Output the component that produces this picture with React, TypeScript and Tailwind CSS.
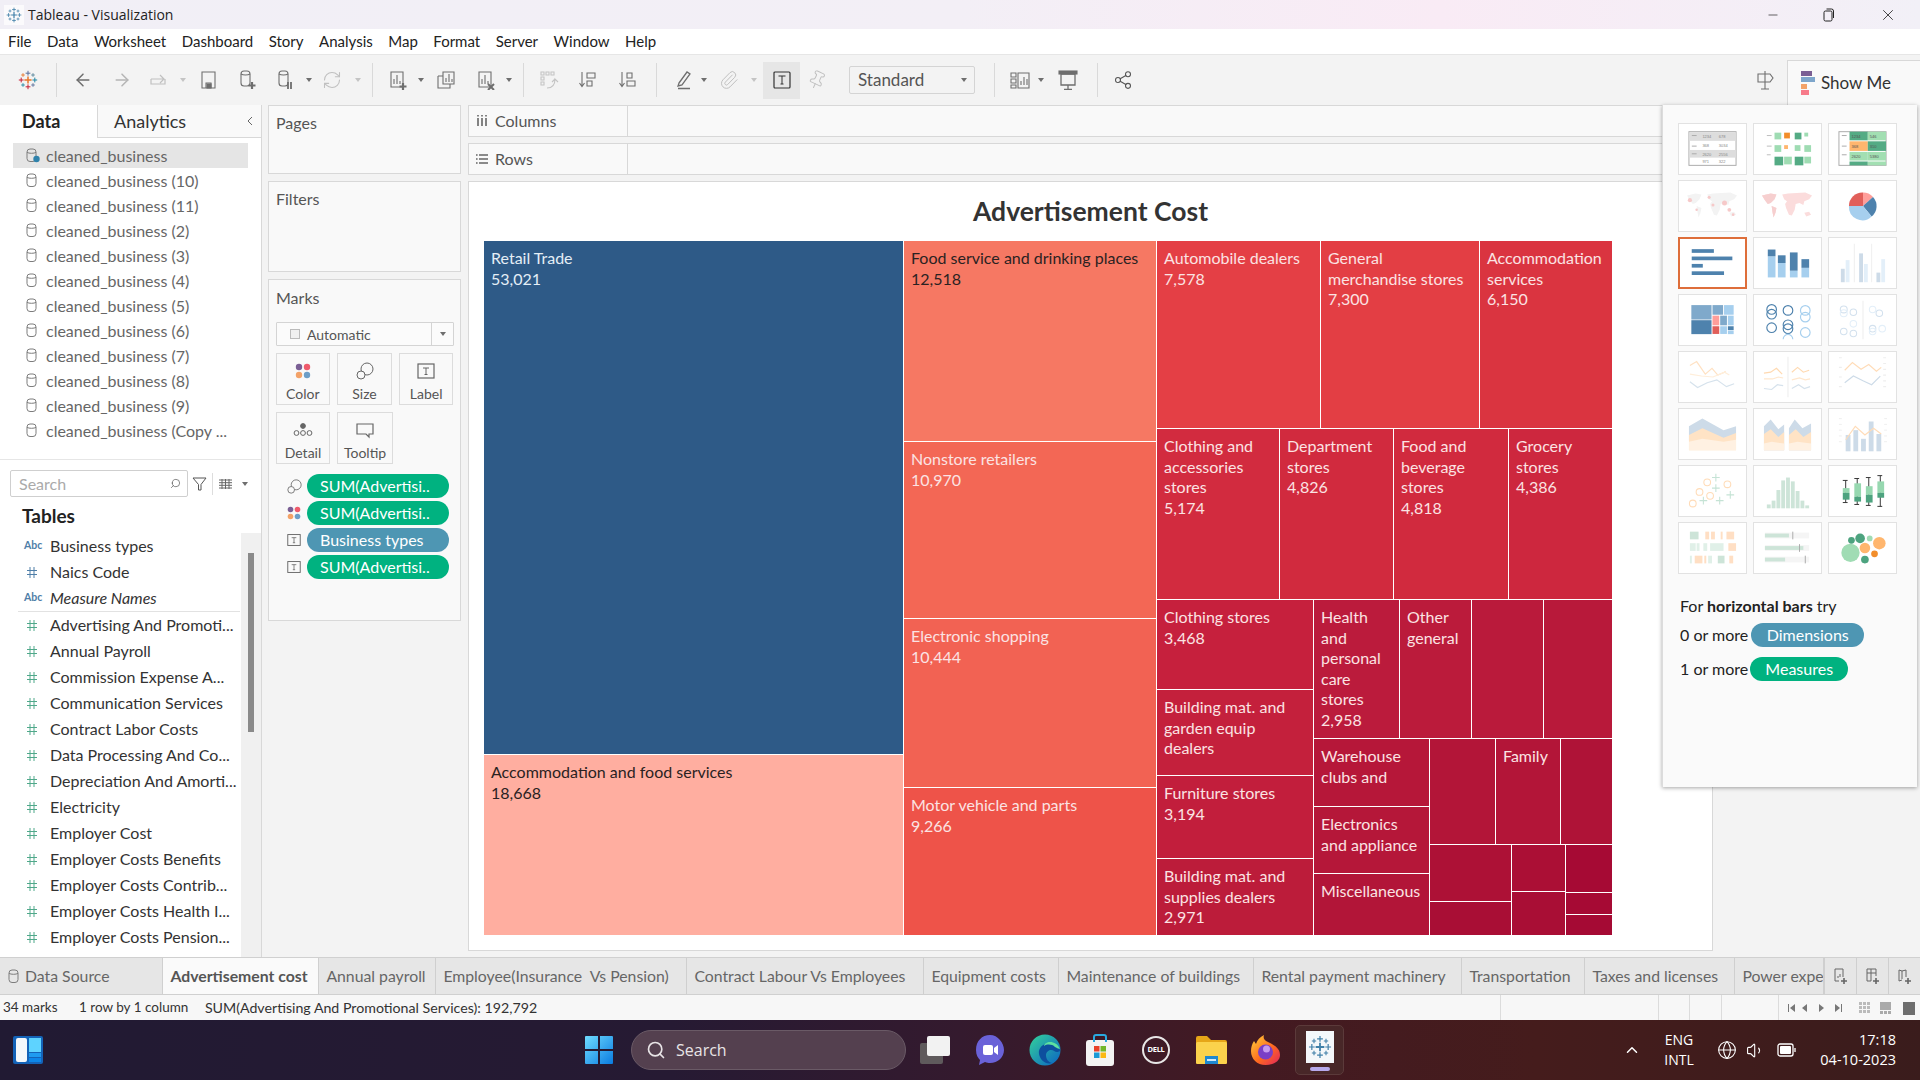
import { ArrowLeft, ArrowRight, Search, Share2, Paperclip, Pin, RefreshCw, ChevronUp, Volume1, Globe, X, Minus } from "lucide-react";
import type { ReactNode } from "react";

const Svg = ({ className = "", w = 20, h = 20, children }: { className?: string; w?: number; h?: number; children: ReactNode }) => (
  <svg width={w} height={h} viewBox={`0 0 ${w} ${h}`} className={`shrink-0 ${className}`} fill="none">
    {children}
  </svg>
);

const Caret = ({ className = "", off = false }: { className?: string; off?: boolean }) => (
  <svg width={6} height={4} viewBox="0 0 6 4" className={`shrink-0 ${className}`}>
    <path d="M0 0h6L3 4z" fill={off ? "#c4c4c4" : "#6e6e6e"} />
  </svg>
);

const Sep = ({ className = "" }: { className?: string }) => <div className={`w-px h-[34px] bg-[#d9d9d9] shrink-0 ${className}`} />;

const TableauLogo = ({ size = 20, mono = false }: { size?: number; mono?: boolean }) => {
  const c = mono ? ["#3f7fa8", "#3f7fa8", "#3f7fa8", "#3f7fa8", "#3f7fa8"] : ["#e8762b", "#5b6f9b", "#c72035", "#1f87a4", "#59879b"];
  const plus = (x: number, y: number, r: number, color: string, sw: number) => (
    <path key={`${x}-${y}`} d={`M${x - r} ${y}h${r * 2}M${x} ${y - r}v${r * 2}`} stroke={color} strokeWidth={sw} />
  );
  return (
    <svg width={size} height={size} viewBox="0 0 20 20" className="shrink-0">
      {plus(10, 10, 3.6, c[0], 1.5)}
      {plus(10, 3.2, 2.4, c[1], 1)}
      {plus(10, 16.8, 2.4, c[2], 1)}
      {plus(3.2, 10, 2.4, c[2], 1)}
      {plus(16.8, 10, 2.4, c[3], 1)}
      {plus(5, 5, 1.8, c[0], 0.9)}
      {plus(15, 5, 1.8, c[4], 0.9)}
      {plus(5, 15, 1.8, c[3], 0.9)}
      {plus(15, 15, 1.8, c[1], 0.9)}
    </svg>
  );
};

const Db = ({ check = false }: { check?: boolean }) => (
  <svg width={14} height={15} viewBox="0 0 14 15" className="shrink-0">
    <rect x="1" y="1" width="9" height="12.5" rx="3" fill="none" stroke="#7d7d7d" />
    <path d="M1 4.4c2 1.2 7 1.2 9 0" fill="none" stroke="#7d7d7d" />
    {check && <circle cx="10.5" cy="11" r="3.2" fill="#2f82ab" />}
  </svg>
);

const Dots = ({ size = 16 }: { size?: number }) => (
  <svg width={size} height={size} viewBox="0 0 16 16" className="shrink-0">
    <circle cx="4" cy="4" r="3.2" fill="#7a5f94" />
    <circle cx="12" cy="4" r="3.2" fill="#ef5b6c" />
    <circle cx="4" cy="12" r="3.2" fill="#f3a268" />
    <circle cx="12" cy="12" r="3.2" fill="#6d9ec7" />
  </svg>
);

const SizeIc = ({ size = 18 }: { size?: number }) => (
  <svg width={size} height={size} viewBox="0 0 18 18" fill="none" stroke="#666" className="shrink-0">
    <circle cx="11" cy="7" r="6" />
    <circle cx="5" cy="13" r="4" fill="#f9f9f9" />
  </svg>
);

const LabelIc = ({ size = 18 }: { size?: number }) => (
  <svg width={size} height={size} viewBox="0 0 18 18" fill="none" className="shrink-0">
    <rect x="1" y="2" width="16" height="14" stroke="#666" strokeWidth="1.2" />
    <path d="M6 6h6M9 6v6.5M7.5 12.5h3" stroke="#666" />
  </svg>
);

const Tile = ({ on = false, children }: { on?: boolean; children: ReactNode }) => (
  <div className={`w-[69px] h-[52px] bg-white border ${on ? "border-2 border-[#de6e3a]" : "border-[#e2e2e2]"}`}>
    <svg viewBox="0 0 69 52" className="w-full h-full block">{children}</svg>
  </div>
);

const world =
  "M8 15l9-2 6 1-2 5-4 4-3 1-3-4zM18 26l5 2-1 5-2 5-1-5zM29 14l6-1 18-1 7 3-3 4-5 2-1 4-4-2-4 1-1 6-3 6-3-1-3-7-1-4 2-3-3-2zM52 33l5-1 2 3-5 2z";

const tiles: ReactNode[] = [
  <g key="t1" fontSize="4.2" fill="#888" fontFamily="Liberation Sans, sans-serif">
    <rect x="10" y="8" width="49" height="35" fill="#fff" stroke="#aaa" />
    <rect x="10.5" y="8.5" width="48" height="9" fill="#ddd" />
    <rect x="10.5" y="27" width="48" height="8" fill="#ddd" />
    <path d="M13 12h5M13 23h5M13 31h5" stroke="#aaa" />
    <text x="24" y="14.5">1234</text><text x="41" y="14.5">678</text>
    <text x="24" y="24">368</text><text x="41" y="24">3034</text>
    <text x="24" y="33">2620</text><text x="41" y="33">2556</text>
    <text x="24" y="41">971</text><text x="41" y="41">322</text>
  </g>,
  <g key="t2">
    <path d="M13 12h5M13 23h5M13 32h4" stroke="#bbb" />
    <g fill="#9fdcb3"><rect x="21" y="9" width="7" height="7" /><rect x="52" y="9" width="4" height="4" /><rect x="21" y="22" width="7" height="7" /><rect x="42" y="22" width="6" height="6" /><rect x="52" y="22" width="7" height="7" /><rect x="31" y="34" width="8" height="8" /><rect x="52" y="34" width="7" height="7" /></g>
    <g fill="#54ab84"><rect x="42" y="9" width="7" height="7" /><rect x="21" y="34" width="9" height="9" /><rect x="42" y="34" width="9" height="9" /></g>
    <rect x="31" y="9" width="6" height="6" fill="#f28e2b" /><rect x="31" y="22" width="4" height="4" fill="#ffb66e" />
  </g>,
  <g key="t3" fontSize="4.2" fill="#555" fontFamily="Liberation Sans, sans-serif">
    <rect x="10" y="8" width="49" height="35" fill="#fff" stroke="#aaa" />
    <rect x="21" y="8" width="19" height="9" fill="#54ab84" /><rect x="40" y="8" width="19" height="9" fill="#a2dfb2" />
    <rect x="21" y="18" width="19" height="10" fill="#ffb66e" /><rect x="40" y="18" width="19" height="10" fill="#54ab84" />
    <rect x="21" y="29" width="19" height="9" fill="#a2dfb2" /><rect x="40" y="29" width="19" height="9" fill="#a2dfb2" />
    <rect x="21" y="39" width="19" height="4" fill="#54ab84" /><rect x="40" y="39" width="19" height="4" fill="#a2dfb2" />
    <path d="M13 12h5M13 23h5M13 32h5" stroke="#aaa" />
    <text x="23" y="14.5">1234</text><text x="42" y="14.5">546</text><text x="23" y="25">368</text><text x="42" y="25">310</text><text x="23" y="35.5">2620</text><text x="42" y="35.5">5380</text>
  </g>,
  <g key="t4">
    <path d={world} fill="#f3f3f3" />
    <g fill="#f6c9c9"><circle cx="11" cy="20" r="2.2" /><circle cx="31" cy="17" r="1.6" /><circle cx="47" cy="23" r="2.6" /><circle cx="52" cy="30" r="2" /><circle cx="35" cy="25" r="1.6" /><circle cx="18" cy="30" r="1.3" /><circle cx="56" cy="35" r="1.4" /></g>
  </g>,
  <g key="t5"><path d={world} fill="#fbdcdc" /><path d="M8 15l9-2 6 1-2 5-4 4-3 1-3-4zM18 26l5 2-1 5-2 5-1-5z" fill="#f6cfcf" /></g>,
  <g key="t6">
    <path d="M35 26V12a14 14 0 0 0-14.6 14z" fill="#e15f5a" />
    <path d="M35 26V12a14 14 0 0 1 10.4 4.6z" fill="#ff9e9a" />
    <path d="M35 26l10.4-9.4a14 14 0 0 1-1.4 20.4z" fill="#4e82ad" />
    <path d="M35 26l9 11a14 14 0 0 1-23.6-11z" fill="#a6cfee" />
  </g>,
  <g key="t7" fill="#4e82ad"><rect x="12" y="11" width="24" height="4" /><rect x="12" y="19" width="44" height="4" /><rect x="12" y="27" width="12" height="4" /><rect x="12" y="35" width="35" height="4" /></g>,
  <g key="t8">
    <g fill="#a6cfee"><rect x="14" y="19" width="8" height="22" /><rect x="24.5" y="26" width="8" height="15" /><rect x="37" y="34" width="8" height="7" /><rect x="49" y="31" width="8" height="10" /></g>
    <g fill="#4e82ad"><rect x="14" y="12" width="8" height="7" /><rect x="24.5" y="18" width="8" height="8" /><rect x="37" y="15" width="8" height="19" /><rect x="49" y="22" width="8" height="9" /></g>
  </g>,
  <g key="t9">
    <path d="M26 6v40M44 6v40" stroke="#eee" />
    <g fill="#cddbe8"><rect x="12" y="32" width="4" height="14" /><rect x="31" y="16" width="4" height="30" /><rect x="49" y="36" width="4" height="10" /></g>
    <g fill="#e3eff9"><rect x="17" y="23" width="4" height="23" /><rect x="36" y="27" width="4" height="19" /><rect x="54" y="22" width="4" height="24" /></g>
  </g>,
  <g key="t10">
    <rect x="12.5" y="10.5" width="21" height="15" fill="#7fa9cb" /><rect x="12.5" y="26.2" width="21" height="14.5" fill="#4e82ad" />
    <rect x="34.5" y="10.5" width="11" height="10" fill="#7fa9cb" /><rect x="46.5" y="10.5" width="10" height="10" fill="#a6cfee" />
    <rect x="34.5" y="21.5" width="7" height="10" fill="#ff9e9a" /><rect x="42.5" y="21.5" width="7" height="10" fill="#7fa9cb" /><rect x="50.5" y="21.5" width="6" height="10" fill="#a6cfee" />
    <rect x="34.5" y="32.5" width="7" height="8" fill="#e15f5a" /><rect x="42.5" y="32.5" width="7" height="8" fill="#a6cfee" /><rect x="50.5" y="32.5" width="6" height="4" fill="#4e82ad" /><rect x="50.5" y="37" width="6" height="3.7" fill="#a6cfee" />
  </g>,
  <g key="t11" fill="none" strokeWidth="1.2">
    <g stroke="#4e82ad"><circle cx="18" cy="15" r="5" /><circle cx="18" cy="20" r="5" /><circle cx="35" cy="16" r="5" /><circle cx="18" cy="34" r="5" /><circle cx="35" cy="31" r="5" /><circle cx="35" cy="35" r="5" /></g>
    <g stroke="#a6cfee"><circle cx="53" cy="16" r="5" /><circle cx="53" cy="23" r="5" /><circle cx="53" cy="39" r="5" /><path d="M30 46a5 5 0 0 1 10 0" /></g>
  </g>,
  <g key="t12" fill="none" strokeWidth="1.1">
    <path d="M35 6v40" stroke="#eee" />
    <g stroke="#d3e1ee"><circle cx="15" cy="15" r="3.6" /><circle cx="25" cy="18" r="3.4" /><circle cx="15" cy="38" r="3.4" /><circle cx="25" cy="40" r="3.4" /><circle cx="52" cy="19" r="3.4" /><circle cx="45" cy="35" r="3.4" /></g>
    <g stroke="#e3eff9"><circle cx="15" cy="19" r="3.6" /><circle cx="25" cy="30" r="3.4" /><circle cx="45" cy="15" r="3.4" /><circle cx="55" cy="35" r="3.4" /><circle cx="45" cy="38" r="3.4" /></g>
  </g>,
  <g key="t13" fill="none" strokeWidth="1.2">
    <path d="M11 14l7-4 9 13 7-6 6 7 7-3 1-1" stroke="#ffe1c2" /><path d="M11 23l12 2 12 1 12-5 5 3" stroke="#ffeeda" /><path d="M11 31l8 6 10-5 10-3 10 7 8-3" stroke="#d6e2ec" />
  </g>,
  <g key="t14" fill="none" strokeWidth="1.2">
    <path d="M35 5v42" stroke="#eee" /><path d="M10 22l7-1 6-4 6 6" stroke="#ffd9b0" /><path d="M10 28h9l6-2 5 1" stroke="#ffe7cd" /><path d="M10 38l8 1 6-5 6 1" stroke="#d6e2ec" /><path d="M39 21l6-5 6 5 6-2" stroke="#ffd9b0" /><path d="M39 29l8-2 6 2 5-1" stroke="#ffe7cd" /><path d="M39 38l7-4 6 4 6-2" stroke="#d6e2ec" />
  </g>,
  <g key="t15" fill="none" strokeWidth="1.2">
    <path d="M10 6h3M10 16h3M10 26h3M10 36h3M56 6h3M56 12h3M56 18h3M56 24h3M56 30h3M56 36h3" stroke="#eee" /><path d="M16 19l8-8 9 7 8-5 8 7 5-4" stroke="#ffdcb8" /><path d="M16 32l9-7 10 5 9 4 9-9" stroke="#cddbe8" />
  </g>,
  <g key="t16">
    <path d="M10 18l14-8 22 12 13-4v13l-13 4-22-8-14 6z" fill="#cddbe8" />
    <path d="M10 27l14-7 22 10 13-5v18H10z" fill="#ffe3c5" /><path d="M10 34l14-3 22 3 13-2v11H10z" fill="#fff1e2" />
  </g>,
  <g key="t17">
    <path d="M10 18l7-7 8 10 6-5v27H10z" fill="#cddbe8" /><path d="M10 26l7-5 8 8 6-5v19H10z" fill="#ffe3c5" /><path d="M10 36l8-2 13 2v7H10z" fill="#fff1e2" />
    <path d="M36 20l6-9 8 9 9-5v28H36z" fill="#cddbe8" /><path d="M36 27l7-6 8 8 8-5v19H36z" fill="#ffe3c5" /><path d="M36 36l9-2 14 2v7H36z" fill="#fff1e2" />
  </g>,
  <g key="t18">
    <path d="M10 10h3M10 16h3M10 22h3M10 28h3M10 34h3M57 10h3M57 16h3M57 22h3M57 28h3M57 34h3" stroke="#eee" />
    <g fill="#cddbe8"><rect x="17" y="27" width="5" height="17" /><rect x="25" y="22" width="5" height="22" /><rect x="33" y="31" width="5" height="13" /><rect x="41" y="13" width="5" height="31" /><rect x="49" y="26" width="5" height="18" /></g>
    <path d="M17 32l10-14 10 9 9-7 8 6" fill="none" stroke="#ffdcb8" strokeWidth="1.2" />
  </g>,
  <g key="t19" fill="none" strokeWidth="1.1">
    <g stroke="#ffdcb8"><circle cx="29" cy="17" r="3.5" /><circle cx="21" cy="27" r="3.5" /><circle cx="50" cy="19" r="3.5" /><circle cx="32" cy="31" r="3.5" /><circle cx="14" cy="39" r="3.5" /></g>
    <path d="M38 8v8M34 12h8M38 19v8M34 23h8M25 32v8M21 36h8M42 32v8M38 36h8M53 26v8M49 30h8" stroke="#c5e3d5" />
  </g>,
  <g key="t20" fill="#cde4d8"><rect x="13" y="40" width="4" height="4" /><rect x="18" y="36" width="4" height="8" /><rect x="23" y="25" width="4" height="19" /><rect x="28" y="15" width="4" height="29" /><rect x="33" y="12" width="4" height="32" /><rect x="38" y="16" width="4" height="28" /><rect x="43" y="26" width="4" height="18" /><rect x="48" y="36" width="4" height="8" /><rect x="53" y="41" width="4" height="3" /></g>,
  <g key="t21">
    <path d="M17 15v23M14 15h5M14 38h5M29 13v27M26 13h5M26 40h5M41 12v29M38 12h5M38 41h5M53 10v32M50 10h5M50 42h5" stroke="#333" />
    <g fill="#97d8b0"><rect x="14" y="23" width="7" height="5" /><rect x="26" y="18" width="7" height="14" /><rect x="38" y="21" width="7" height="9" /><rect x="50" y="16" width="7" height="12" /></g>
    <g fill="#4da37f"><rect x="14" y="28" width="7" height="7" /><rect x="26" y="32" width="7" height="5" /><rect x="38" y="30" width="7" height="8" /><rect x="50" y="28" width="7" height="5" /></g>
  </g>,
  <g key="t22">
    <g fill="#cde4d8"><rect x="11" y="9" width="9" height="8" /><rect x="40" y="34" width="7" height="8" /></g>
    <g fill="#e0f0e8"><rect x="11" y="21" width="6" height="8" /><rect x="18" y="21" width="3" height="8" /><rect x="25" y="21" width="4" height="8" /><rect x="32" y="21" width="14" height="8" /><rect x="11" y="34" width="2" height="8" /><rect x="30" y="34" width="4" height="8" /></g>
    <g fill="#ffdfc4"><rect x="27" y="9" width="4" height="8" /><rect x="33" y="9" width="4" height="8" /><rect x="43" y="9" width="2" height="8" /><rect x="49" y="9" width="8" height="8" /><rect x="51" y="21" width="8" height="8" /><rect x="16" y="34" width="8" height="8" /><rect x="26" y="34" width="2" height="8" /><rect x="52" y="34" width="4" height="8" /></g>
  </g>,
  <g key="t23">
    <g fill="#f5f5f5"><rect x="11" y="10" width="46" height="6" /><rect x="11" y="23" width="46" height="6" /><rect x="11" y="35" width="46" height="6" /></g>
    <g fill="#cde4d8"><rect x="11" y="11" width="25" height="4" /><rect x="11" y="24" width="40" height="4" /><rect x="11" y="36" width="21" height="4" /></g>
    <path d="M40 9v8M47 22v8M53 34v8" stroke="#aaa" />
  </g>,
  <g key="t24">
    <circle cx="22" cy="31" r="9.5" fill="#a0dcb4" /><circle cx="23" cy="18" r="3.5" fill="#4da37f" /><circle cx="32" cy="16" r="5" fill="#4da37f" /><circle cx="42" cy="16" r="3" fill="#a0dcb4" />
    <circle cx="37" cy="26" r="5.5" fill="#ffb66e" /><circle cx="52" cy="21" r="6.5" fill="#ffb66e" /><circle cx="47" cy="32" r="3.5" fill="#f28e2b" /><circle cx="37" cy="38" r="4" fill="#4da37f" />
  </g>,
];

const ShowMe = () => (
  <div className="absolute top-0 right-[3px] w-[255px] h-[682px] bg-[#fafafa] border-l border-[#dcdcdc] shadow-[0_1px_4px_rgba(0,0,0,0.35)] pl-[15px] pt-[18px]">
    <div className="grid grid-cols-[69px_69px_69px] auto-rows-[52px] gap-x-[6px] gap-y-[5px]">
      {tiles.map((t, i) => (
        <Tile key={i} on={i === 6}>{t}</Tile>
      ))}
    </div>
    <p className="mt-[22px] ml-[2px] text-[16px] leading-[20px] text-[#222]">
      For <b className="font-bold">horizontal bars</b> try
    </p>
    <div className="mt-[7px] ml-[2px] flex items-center text-[#222] text-[16px]">
      <span>0 or more</span>
      <span className="ml-[3px] w-[113px] h-[24px] rounded-full bg-[#4e96b3] text-white flex items-center justify-center">Dimensions</span>
    </div>
    <div className="mt-[10px] ml-[2px] flex items-center text-[#222] text-[16px]">
      <span>1 or more</span>
      <span className="ml-[2px] w-[98px] h-[24px] rounded-full bg-[#00b280] text-white flex items-center justify-center">Measures</span>
    </div>
  </div>
);

const Cell = ({ bg, lines, className = "", dark = false }: { bg: string; lines?: string[]; className?: string; dark?: boolean }) => (
  <div className={`${bg} ${className} ${dark ? "text-[#2a2222]" : "text-[#fbe3e3]"} pl-[7px] pt-[7px] text-[16px] leading-[20.5px] overflow-hidden min-w-0`}>
    {lines?.map((l) => (
      <div key={l} className="whitespace-nowrap">{l}</div>
    ))}
  </div>
);

const Treemap = () => (
  <div className="flex gap-px w-[1128px] h-[694px] font-['Lato',sans-serif]">
    <div className="w-[419px] flex flex-col gap-px">
      <Cell bg="bg-[#2e5a87]" className="h-[513px] !text-[#e4eef6]" lines={["Retail Trade", "53,021"]} />
      <Cell bg="bg-[#ffaea0]" className="flex-1" dark lines={["Accommodation and food services", "18,668"]} />
    </div>
    <div className="w-[252px] flex flex-col gap-px">
      <Cell bg="bg-[#f67863]" className="h-[200px]" dark lines={["Food service and drinking places", "12,518"]} />
      <Cell bg="bg-[#f36755]" className="h-[176px]" lines={["Nonstore retailers", "10,970"]} />
      <Cell bg="bg-[#f26253]" className="h-[168px]" lines={["Electronic shopping", "10,444"]} />
      <Cell bg="bg-[#ee5349]" className="flex-1" lines={["Motor vehicle and parts", "9,266"]} />
    </div>
    <div className="flex-1 flex flex-col gap-px">
      <div className="h-[187px] flex gap-px">
        <Cell bg="bg-[#e43f45]" className="w-[163px]" lines={["Automobile dealers", "7,578"]} />
        <Cell bg="bg-[#e33e44]" className="w-[158px]" lines={["General", "merchandise stores", "7,300"]} />
        <Cell bg="bg-[#da3440]" className="flex-1" lines={["Accommodation", "services", "6,150"]} />
      </div>
      <div className="h-[170px] flex gap-px">
        <Cell bg="bg-[#d22b3f]" className="w-[122px]" lines={["Clothing and", "accessories", "stores", "5,174"]} />
        <Cell bg="bg-[#d12a3e]" className="w-[113px]" lines={["Department", "stores", "4,826"]} />
        <Cell bg="bg-[#d12a3e]" className="w-[114px]" lines={["Food and", "beverage", "stores", "4,818"]} />
        <Cell bg="bg-[#cd273e]" className="flex-1" lines={["Grocery", "stores", "4,386"]} />
      </div>
      <div className="flex-1 flex gap-px min-h-0">
        <div className="w-[156px] flex flex-col gap-px">
          <Cell bg="bg-[#c6203d]" className="h-[89px]" lines={["Clothing stores", "3,468"]} />
          <Cell bg="bg-[#c4203c]" className="h-[85px]" lines={["Building mat. and", "garden equip", "dealers"]} />
          <Cell bg="bg-[#c21e3c]" className="h-[82px]" lines={["Furniture stores", "3,194"]} />
          <Cell bg="bg-[#bc1c3a]" className="flex-1" lines={["Building mat. and", "supplies dealers", "2,971"]} />
        </div>
        <div className="flex-1 flex flex-col gap-px min-w-0">
          <div className="h-[138px] flex gap-px">
            <Cell bg="bg-[#bb1b3c]" className="w-[85px]" lines={["Health", "and", "personal", "care", "stores", "2,958"]} />
            <Cell bg="bg-[#bb1b3b]" className="w-[71px]" lines={["Other", "general"]} />
            <Cell bg="bg-[#ba1a3b]" className="w-[71px]" />
            <Cell bg="bg-[#b8193a]" className="flex-1" />
          </div>
          <div className="flex-1 flex gap-px min-h-0">
            <div className="w-[115px] flex flex-col gap-px">
              <Cell bg="bg-[#b61739]" className="h-[67px]" lines={["Warehouse", "clubs and"]} />
              <Cell bg="bg-[#b51739]" className="h-[66px]" lines={["Electronics", "and appliance"]} />
              <Cell bg="bg-[#b21538]" className="flex-1" lines={["Miscellaneous"]} />
            </div>
            <div className="flex-1 flex flex-col gap-px min-w-0">
              <div className="h-[105px] flex gap-px">
                <Cell bg="bg-[#b31538]" className="w-[65px]" />
                <Cell bg="bg-[#b31538]" className="w-[64px]" lines={["Family"]} />
                <Cell bg="bg-[#af1337]" className="flex-1" />
              </div>
              <div className="flex-1 flex gap-px min-h-0">
                <div className="w-[81px] flex flex-col gap-px">
                  <Cell bg="bg-[#ad1136]" className="h-[56px]" />
                  <Cell bg="bg-[#a90e35]" className="flex-1" />
                </div>
                <div className="w-[53px] flex flex-col gap-px">
                  <Cell bg="bg-[#ab0f35]" className="h-[46px]" />
                  <Cell bg="bg-[#a90e35]" className="flex-1" />
                </div>
                <div className="flex-1 flex flex-col gap-px">
                  <Cell bg="bg-[#a60a34]" className="h-[47px]" />
                  <Cell bg="bg-[#a60a34]" className="h-[21px]" />
                  <Cell bg="bg-[#a50a34]" className="flex-1" />
                </div>
              </div>
            </div>
          </div>
        </div>
      </div>
    </div>
  </div>
);

const sources = ["cleaned_business", "cleaned_business (10)", "cleaned_business (11)", "cleaned_business (2)", "cleaned_business (3)", "cleaned_business (4)", "cleaned_business (5)", "cleaned_business (6)", "cleaned_business (7)", "cleaned_business (8)", "cleaned_business (9)", "cleaned_business (Copy ..."];

const measures = ["Advertising And Promoti...", "Annual Payroll", "Commission Expense A...", "Communication Services", "Contract Labor Costs", "Data Processing And Co...", "Depreciation And Amorti...", "Electricity", "Employer Cost", "Employer Costs Benefits", "Employer Costs Contrib...", "Employer Costs Health I...", "Employer Costs Pension..."];

const Hash = ({ color }: { color: string }) => (
  <svg width="12" height="13" viewBox="0 0 12 13" fill="none" stroke={color} className="ml-[26px] mr-[12px] shrink-0">
    <path d="M4 1v11M8 1v11M1 4.500h10M1 8.500h10" />
  </svg>
);

const Field = ({ kind, name, italic = false }: { kind: "abc" | "dim" | "num"; name: string; italic?: boolean }) => (
  <div className="h-[26px] flex items-center text-[16px] text-[#333]">
    {kind === "abc" && <span className="w-[50px] pl-[24px] text-[10.5px] font-bold text-[#4f7ea8] shrink-0">Abc</span>}
    {kind === "dim" && <Hash color="#4f7ea8" />}
    {kind === "num" && <Hash color="#4fa88a" />}
    <span className={`whitespace-nowrap ${italic ? "italic" : ""}`}>{name}</span>
  </div>
);

const DataPane = () => (
  <div className="w-[262px] h-full shrink-0 flex flex-col bg-white border-r border-[#d8d8d8]">
    <div className="h-[33px] flex shrink-0">
      <div className="w-[97px] pl-[22px] pt-[3px] text-[18px] font-bold text-[#222]">Data</div>
      <div className="flex-1 bg-[#f9f9f9] border-l border-b border-[#d8d8d8] flex items-center pl-[16px] text-[18px] text-[#333]">
        Analytics
        <svg width="6" height="10" viewBox="0 0 6 10" className="ml-auto mr-[8px]" fill="none" stroke="#666"><path d="M5 1L1 5l4 4" /></svg>
      </div>
    </div>
    <div className="pt-[5px] h-[322px] shrink-0 border-b border-[#e6e6e6]">
      {sources.map((s, i) => (
        <div key={s} className={`h-[25px] ml-[13px] w-[235px] pl-[13px] flex items-center gap-[6px] text-[16px] text-[#666] ${i === 0 ? "bg-[#e5e5e5]" : ""}`}>
          <Db check={i === 0} />
          <span className="whitespace-nowrap">{s}</span>
        </div>
      ))}
    </div>
    <div className="mt-[10px] flex items-center shrink-0 h-[27px]">
      <div className="ml-[10px] w-[178px] h-[27px] border border-[#cfcfcf] rounded-[2px] bg-white flex items-center pl-[8px] pr-[6px] text-[16px] text-[#aaa]">
        Search
        <Search size={11} strokeWidth={1.5} className="ml-auto text-[#555] -scale-x-100" />
      </div>
      <svg width="15" height="14" viewBox="0 0 15 14" className="ml-[4px]" fill="none" stroke="#555"><path d="M1 1h13L9 7.5V13H6.5V7.5z" /></svg>
      <div className="ml-[5px] w-px h-[22px] bg-[#ddd]" />
      <svg width="13" height="10" viewBox="0 0 13 10" className="ml-[6px]" stroke="#666"><path d="M0 1h13M0 3.7h13M0 6.3h13M0 9h13M3 0v10M6.5 0v10M10 0v10" /></svg>
      <Caret className="ml-[10px]" />
    </div>
    <div className="h-[36px] shrink-0 pl-[22px] pt-[6px] text-[19px] leading-[26px] font-bold text-[#222]">Tables</div>
    <div className="flex-1 flex min-h-0 overflow-hidden">
      <div className="w-[241px] overflow-hidden">
        <Field kind="abc" name="Business types" />
        <Field kind="dim" name="Naics Code" />
        <Field kind="abc" name="Measure Names" italic />
        <div className="ml-[18px] mr-[1px] h-px bg-[#e2e2e2]" />
        {measures.map((m) => (
          <Field key={m} kind="num" name={m} />
        ))}
      </div>
      <div className="flex-1 bg-[#f0f0f0]">
        <div className="ml-[7px] mt-[20px] w-[6px] h-[179px] bg-[#8a8a8a]" />
      </div>
    </div>
  </div>
);

const MarkBtn = ({ w, label, icon }: { w: string; label: string; icon: ReactNode }) => (
  <div className={`${w} h-[52px] border border-[#dcdcdc] bg-[#f9f9f9] flex flex-col items-center pt-[7px] text-[#555] text-[14px]`}>
    <div className="h-[20px] flex items-center">{icon}</div>
    <span className="mt-[5px] leading-[16px]">{label}</span>
  </div>
);

const Pill = ({ icon, label, blue = false }: { icon: ReactNode; label: string; blue?: boolean }) => (
  <div className="flex items-center h-[24px]">
    <div className="w-[38px] pl-[18px] flex">{icon}</div>
    <div className={`w-[142px] h-[24px] rounded-full ${blue ? "bg-[#4e96b3]" : "bg-[#00b280]"} text-white text-[16px] pl-[13px] flex items-center whitespace-nowrap`}>{label}</div>
  </div>
);

const Card = ({ className, title, children }: { className: string; title: string; children?: ReactNode }) => (
  <div className={`${className} border border-[#d8d8d8] bg-[#f9f9f9] shrink-0`}>
    <div className="px-[7px] text-[16px] leading-[20px] text-[#555]">{title}</div>
    {children}
  </div>
);

const MarksColumn = () => (
  <div className="ml-[6px] w-[193px] shrink-0 flex flex-col gap-[7px]">
    <Card className="h-[69px] pt-[7px]" title="Pages" />
    <Card className="h-[91px] pt-[7px]" title="Filters" />
    <Card className="h-[342px] pt-[8px]" title="Marks">
      <div className="mx-[7px] mt-[14px] h-[24px] w-[178px] border border-[#d4d4d4] rounded-[1px] flex items-center bg-white/40 text-[14px] text-[#555]">
        <div className="w-[10px] h-[10px] ml-[13px] mr-[7px] border border-[#bbb] bg-[#f0f0f0]" />
        Automatic
        <div className="ml-auto w-[22px] h-full border-l border-[#d4d4d4] flex items-center justify-center"><Caret /></div>
      </div>
      <div className="mx-[7px] mt-[7px] flex gap-[7px]">
        <MarkBtn w="w-[54px]" label="Color" icon={<Dots />} />
        <MarkBtn w="w-[56px]" label="Size" icon={<SizeIc />} />
        <MarkBtn w="w-[54px]" label="Label" icon={<LabelIc />} />
      </div>
      <div className="mx-[7px] mt-[7px] flex gap-[7px]">
        <MarkBtn w="w-[54px]" label="Detail" icon={
          <svg width="20" height="14" viewBox="0 0 20 14" fill="none" stroke="#666"><circle cx="10" cy="3" r="2.4" fill="#666" /><circle cx="3.5" cy="10" r="2.4" /><circle cx="10" cy="10" r="2.4" /><circle cx="16.5" cy="10" r="2.4" /></svg>
        } />
        <MarkBtn w="w-[56px]" label="Tooltip" icon={
          <svg width="18" height="17" viewBox="0 0 18 17" fill="none" stroke="#666" strokeWidth="1.2"><path d="M1 2h16v10h-4v3l-3-3H1z" /></svg>
        } />
      </div>
      <div className="mt-[10px] flex flex-col gap-[3px]">
        <Pill icon={<SizeIc size={15} />} label="SUM(Advertisi.." />
        <Pill icon={<Dots size={14} />} label="SUM(Advertisi.." />
        <Pill icon={<LabelIc size={14} />} label="Business types" blue />
        <Pill icon={<LabelIc size={14} />} label="SUM(Advertisi.." />
      </div>
    </Card>
  </div>
);

const Shelf = ({ label, icon }: { label: string; icon: ReactNode }) => (
  <div className="h-[32px] flex border border-[#d8d8d8] bg-[#f9f9f9] shrink-0">
    <div className="w-[159px] border-r border-[#d8d8d8] flex items-center pl-[7px] gap-[7px] text-[16px] text-[#555]">
      {icon}
      {label}
    </div>
  </div>
);

const tabs = [
  { w: "w-[157px]", label: "Advertisement cost", active: true },
  { w: "w-[117px]", label: "Annual payroll" },
  { w: "w-[251px]", label: "Employee(Insurance  Vs Pension)" },
  { w: "w-[237px]", label: "Contract Labour Vs Employees" },
  { w: "w-[135px]", label: "Equipment costs" },
  { w: "w-[195px]", label: "Maintenance of buildings" },
  { w: "w-[208px]", label: "Rental payment machinery" },
  { w: "w-[123px]", label: "Transportation" },
  { w: "w-[150px]", label: "Taxes and licenses" },
  { w: "w-[89px]", label: "Power expe" },
];

const TabAdd = ({ children }: { children: ReactNode }) => (
  <div className="w-[32px] border-l border-[#cfcfcf] flex items-center justify-center">
    <svg width="16" height="17" viewBox="0 0 16 17" fill="none" stroke="#666">
      {children}
      <path d="M11 10v6M8 13h6" strokeWidth="1.6" />
    </svg>
  </div>
);

const Tabs = () => (
  <div className="h-[38px] shrink-0 flex bg-[#e6e6e6] border-y border-[#d0d0d0] text-[15.8px] text-[#666]">
    <div className="w-[163px] flex items-center pl-[8px] gap-[3px]"><Db />Data Source</div>
    {tabs.map((t) => (
      <div key={t.label} className={`${t.w} shrink-0 flex items-center pl-[7px] whitespace-pre overflow-hidden ${t.active ? "bg-[#fafafa] font-bold text-[#555] border-x border-[#d0d0d0]" : "border-r border-[#cfcfcf]"}`}>
        {t.label}
      </div>
    ))}
    <TabAdd><path d="M2 1h8v8M2 1v12h4M5 8v2M7 6v3" /></TabAdd>
    <TabAdd><path d="M2 1h9v7M2 1v12h4M2 5h9M6 1v12" /></TabAdd>
    <TabAdd><path d="M2 2l3 1 4-1v7M2 2v11l3-1M5 3v8" /></TabAdd>
  </div>
);

const StatusBar = () => (
  <div className="h-[25px] shrink-0 flex items-center bg-[#f7f7f7] text-[13.5px] text-[#333]">
    <span className="w-[79px] pl-[3px]">34 marks</span>
    <span className="w-[126px] whitespace-nowrap">1 row by 1 column</span>
    <span className="w-[1296px] text-[14.2px]">SUM(Advertising And Promotional Services): 192,792</span>
    <div className="w-[158px] h-full border-l border-[#dcdcdc]" />
    <div className="w-[31px] h-full border-l border-[#dcdcdc]" />
    <div className="w-[32px] h-full border-l border-[#dcdcdc]" />
    <div className="w-[57px] h-full border-l border-[#dcdcdc]" />
    <div className="flex-1 h-full border-l border-[#dcdcdc] flex items-center">
      <svg width="141" height="14" viewBox="0 0 141 14" fill="#777">
        <path d="M9 3h1v8H9zM16 3v8l-5-4zM28 3v8l-5-4zM40 3v8l5-4zM56 3v8l5-4zM62 3h1v8h-1z" />
        <path d="M80 1h3v3h-3zM84 1h3v3h-3zM88 1h3v3h-3zM80 5h3v3h-3zM84 5h3v3h-3zM88 5h3v3h-3zM80 9h3v3h-3zM84 9h3v3h-3zM88 9h3v3h-3z" fill="#bbb" />
        <path d="M101 1h11v8h-11zM101 10h3v3h-3zM105 10h3v3h-3zM109 10h3v3h-3z" fill="#aaa" />
        <path d="M124 1h12v13h-12z" fill="#6e6e6e" />
      </svg>
    </div>
  </div>
);

const Windows = () => (
  <svg width="30" height="30" viewBox="0 0 30 30" className="shrink-0">
    <defs><linearGradient id="wg" x1="0" y1="0" x2="1" y2="1"><stop offset="0" stopColor="#6fdcff" /><stop offset="1" stopColor="#0a7be0" /></linearGradient></defs>
    <path d="M1 2a1 1 0 0 1 1-1h12v13H1zM16 1h12a1 1 0 0 1 1 1v12H16zM1 16h13v13H2a1 1 0 0 1-1-1zM16 16h13v12a1 1 0 0 1-1 1H16z" fill="url(#wg)" />
  </svg>
);

const Taskbar = () => (
  <div className="h-[60px] shrink-0 flex items-center bg-[linear-gradient(90deg,#211a33_0%,#261a33_35%,#341a2e_50%,#431a22_65%,#451c1c_80%,#3a1c1c_100%)] text-white font-['Open_Sans',sans-serif]">
    <svg width="30" height="28" viewBox="0 0 30 28" className="ml-[13px] shrink-0">
      <rect width="30" height="28" rx="2" fill="#1463b8" />
      <rect x="3" y="2" width="11" height="24" rx="2" fill="#f4f8fb" />
      <rect x="16" y="2" width="12" height="14" fill="#5ed3ff" /><rect x="16" y="17" width="12" height="4" fill="#1f9bf0" /><rect x="16" y="22" width="12" height="4" fill="#0d86e8" />
    </svg>
    <div className="ml-[541px]"><Windows /></div>
    <div className="ml-[17px] w-[275px] h-[40px] rounded-full bg-[#54404f] border border-[#6a5a66] flex items-center pl-[14px] gap-[10px] text-[16px] text-[#e8e4e6]">
      <Search size={20} strokeWidth={2} />
      Search
    </div>
    <svg width="30" height="30" viewBox="0 0 30 30" className="ml-[14px] shrink-0">
      <rect x="0" y="8" width="23" height="21" rx="2" fill="#5f5a5c" /><rect x="7" y="1" width="23" height="20" rx="2" fill="#f2f2f2" />
    </svg>
    <svg width="30" height="32" viewBox="0 0 30 32" className="ml-[25px] shrink-0">
      <path d="M15 1C7 1 1 7 1 16c0 5 2 8 4 10l-1 5 6-3c2 .7 3 1 5 1 8 0 14-6 14-13S23 1 15 1z" fill="#6a62d8" /><rect x="8" y="11" width="10" height="10" rx="2" fill="#fff" /><path d="M19 14l4-3v10l-4-3z" fill="#fff" />
    </svg>
    <svg width="32" height="32" viewBox="0 0 32 32" className="ml-[24px] shrink-0">
      <defs><linearGradient id="eg" x1="0" y1="0" x2="1" y2="1"><stop offset="0" stopColor="#34d39a" /><stop offset="1" stopColor="#0b62c4" /></linearGradient></defs>
      <circle cx="16" cy="16" r="15.5" fill="url(#eg)" /><path d="M31 17c0-5-5-8-10-8-7 0-12 5-11 11s7 11 13 9c-4-1-6-4-6-8 0-3 3-5 5-5 4 0 4 4 9 1z" fill="#0d4f9e" /><path d="M31 15c-2-5-6-7-10-7-3 0-6 2-6 4 3-2 8-2 11 1 2 1 4 2 5 2z" fill="#5ee0a0" />
    </svg>
    <svg width="28" height="32" viewBox="0 0 28 32" className="ml-[25px] shrink-0">
      <rect y="6" width="28" height="26" rx="3" fill="#f3f3f3" /><path d="M8 8V3a2 2 0 0 1 2-2h8a2 2 0 0 1 2 2v5" fill="none" stroke="#29a9e0" strokeWidth="2" />
      <rect x="8" y="12" width="5.5" height="5.5" fill="#e8412a" /><rect x="14.5" y="12" width="5.5" height="5.5" fill="#72b62a" /><rect x="8" y="18.5" width="5.5" height="5.5" fill="#1a9ad6" /><rect x="14.5" y="18.5" width="5.5" height="5.5" fill="#fbb914" />
    </svg>
    <div className="ml-[28px] w-[28px] h-[28px] rounded-full border-2 border-[#e8e6e6] flex items-center justify-center text-[7.5px] font-bold shrink-0 tracking-[-0.3px]">DELL</div>
    <svg width="31" height="30" viewBox="0 0 31 30" className="ml-[26px] shrink-0">
      <path d="M0 3a2 2 0 0 1 2-2h9l4 4h14a2 2 0 0 1 2 2v20a2 2 0 0 1-2 2H2a2 2 0 0 1-2-2z" fill="#e6a618" /><rect y="7" width="31" height="22" rx="1.5" fill="#fbd24c" /><rect x="9" y="21" width="13" height="8" fill="#1e88d0" /><rect x="11" y="24" width="9" height="2" fill="#cfe9fa" />
    </svg>
    <svg width="29" height="32" viewBox="0 0 29 32" className="ml-[24px] shrink-0">
      <defs><linearGradient id="fg" x1="0" y1="0" x2="1" y2="1"><stop offset="0" stopColor="#ffd43a" /><stop offset="0.55" stopColor="#ff6a1f" /><stop offset="1" stopColor="#e0245e" /></linearGradient></defs>
      <path d="M14.5 31C6 31 0 25 0 17c0-4 1-7 3-10l2 3c1-4 4-7 8-9-1 3 0 5 4 7 6 3 12 6 12 13 0 6-6 10-14.500 10z" fill="url(#fg)" /><circle cx="14.500" cy="18" r="7.500" fill="#7a3fc6" /><circle cx="15.500" cy="15" r="3.500" fill="#c79bf0" />
    </svg>
    <div className="ml-[15px] w-[49px] h-[50px] rounded-[5px] bg-[#4a2a2a]/80 border border-[#5b3a3a] flex flex-col items-center pt-[5px] shrink-0">
      <div className="w-[28px] h-[32px] bg-[#f4f7fa] flex items-center justify-center"><TableauLogo size={24} mono /></div>
      <div className="mt-[4px] w-[20px] h-[4px] rounded-full bg-[#b7a9ec]" />
    </div>
    <ChevronUp size={18} strokeWidth={2} className="ml-[279px] shrink-0" />
    <div className="ml-[23px] w-[30px] text-[14px] leading-[20px] flex flex-col items-center">
      <span>ENG</span>
      <span>INTL</span>
    </div>
    <Globe size={20} strokeWidth={1.3} className="ml-[23px] shrink-0" />
    <Volume1 size={19} strokeWidth={1.4} className="ml-[9px] shrink-0" />
    <svg width="20" height="14" viewBox="0 0 20 14" fill="none" stroke="#fff" className="ml-[12px] shrink-0" strokeWidth="1.3"><rect x="1" y="1" width="15" height="12" rx="2" /><rect x="3" y="3" width="11" height="8" rx="1" fill="#fff" stroke="none" /><path d="M18 5v4" /></svg>
    <div className="ml-auto mr-[24px] text-[14.5px] leading-[20px] text-right">
      <div>17:18</div>
      <div>04-10-2023</div>
    </div>
  </div>
);

const Ic = ({ className, children }: { className: string; children: ReactNode }) => (
  <Svg className={className}><g stroke="#6e6e6e" strokeWidth="1.1">{children}</g></Svg>
);

const Toolbar = () => (
  <div className="h-[51px] shrink-0 flex items-center bg-[#f3f3f3] border-t border-[#e6e6e6]">
    <div className="ml-[18px]"><TableauLogo /></div>
    <Sep className="ml-[18px]" />
    <ArrowLeft size={20} strokeWidth={1.8} className="ml-[16px] text-[#6e6e6e] shrink-0" />
    <ArrowRight size={20} strokeWidth={1.8} className="ml-[19px] text-[#b5b5b5] shrink-0" />
    <Svg className="ml-[17px]"><g stroke="#c0c0c0" strokeWidth="1.2"><path d="M2 9v5h14V9M2 9h12M11 5l4 4-4 4" /></g></Svg>
    <Caret off className="ml-[11px]" />
    <Ic className="ml-[13px]"><path d="M3 2h13v16H3zM7 18v-5h5v5" /><rect x="8" y="14" width="4" height="4" fill="#6e6e6e" /></Ic>
    <Ic className="ml-[18px]"><rect x="4" y="1" width="9" height="15" rx="3" /><path d="M4 4c2 1.400 7 1.400 9 0" /><path d="M15 12v7M11.500 15.500h7" strokeWidth="2.200" /></Ic>
    <Ic className="ml-[18px]"><rect x="4" y="1" width="9" height="15" rx="3" /><path d="M4 4c2 1.400 7 1.400 9 0" /><path d="M13 12v7M16 12v7" strokeWidth="1.800" /></Ic>
    <Caret className="ml-[11px]" />
    <RefreshCw size={20} strokeWidth={1.3} className="ml-[10px] text-[#c0c0c0] shrink-0" />
    <Caret off className="ml-[13px]" />
    <Sep className="ml-[11px]" />
    <Ic className="ml-[15px]"><path d="M3 2h12v15H3zM6 14V9M9 14V5M12 14v-3" /><path d="M15 13v7M11.500 16.500h7" strokeWidth="2.200" /></Ic>
    <Caret className="ml-[10px]" />
    <Ic className="ml-[12px]"><path d="M7 2h11v12H7zM2 6h5M2 6v12h12v-4M10 12V8M13 12V4M16 12v-3" /></Ic>
    <Ic className="ml-[20px]"><path d="M3 2h12v15H3zM6 14V9M9 14V5M12 14v-3" /><path d="M12 14l6 6M18 14l-6 6" strokeWidth="2" /></Ic>
    <Caret className="ml-[10px]" />
    <Sep className="ml-[11px]" />
    <Svg className="ml-[15px]"><g stroke="#c4c4c4" strokeWidth="1.100"><path d="M2 2h3v3H2zM7 2h3v3H7zM12 2h3v3h-3zM2 7h3v3H2zM2 12h3v3H2zM8 18c5 0 8-3 8-9l3 3M16 9l-3 3" /></g></Svg>
    <Ic className="ml-[19px]"><path d="M4 2v14M1.500 13L4 16.500 6.500 13M9 3h8v5H9zM9 11h5v5H9z" /></Ic>
    <Ic className="ml-[20px]"><path d="M4 2v14M1.500 13L4 16.500 6.500 13M9 3h5v5H9zM9 11h8v5H9z" /></Ic>
    <Sep className="ml-[18px]" />
    <Svg className="ml-[17px]"><path d="M5 13L13 2l3 2-8 11-4 1zM4 18.500h12" stroke="#6e6e6e" strokeWidth="1.300" /></Svg>
    <Caret className="ml-[7px]" />
    <Paperclip size={20} strokeWidth={1.2} className="ml-[12px] text-[#c0c0c0] shrink-0" />
    <Caret off className="ml-[12px]" />
    <div className="ml-[6px] w-[37px] h-[37px] bg-[#e6e6e6] flex items-center justify-center shrink-0">
      <Svg w={18} h={18}><rect x="1" y="1" width="16" height="16" rx="1" stroke="#333" strokeWidth="1.200" /><path d="M5.500 5h7M9 5v8M7.500 13h3" stroke="#333" /></Svg>
    </div>
    <Pin size={20} strokeWidth={1.200} className="ml-[7px] text-[#c0c0c0] shrink-0 rotate-[25deg]" />
    <div className="ml-[22px] w-[126px] h-[28px] border border-[#d4d4d4] rounded-[2px] flex items-center pl-[8px] text-[17px] text-[#555] shrink-0">
      Standard
      <Caret className="ml-auto mr-[7px]" />
    </div>
    <Sep className="ml-[19px]" />
    <Ic className="ml-[15px]"><path d="M1 3h5v4H1zM1 9h5v4H1zM1 15h5v3H1zM8 3h11v15H8zM11 15v-4M14 15V7M17 15v-6" /></Ic>
    <Caret className="ml-[8px]" />
    <Ic className="ml-[14px]"><path d="M3 4h14v11H3zM10 15v5M6 19.500h8" strokeWidth="1.300" /><rect x="1" y="1" width="18" height="3" fill="#6e6e6e" /></Ic>
    <Sep className="ml-[19px]" />
    <Share2 size={20} strokeWidth={1.300} className="ml-[15px] text-[#555] shrink-0" />
    <Ic className="ml-auto"><path d="M10 1v18M6 19h8M3 4h12l3 4-3 4H3z" /></Ic>
    <div className="ml-[12px] w-[133px] h-[45px] self-end bg-[#f9f9f9] border-l border-t border-[#d8d8d8] flex items-center pl-[13px] gap-[6px] text-[17px] text-[#333] shrink-0">
      <svg width="14" height="27" viewBox="0 0 14 27" className="shrink-0"><rect width="11" height="5" y="1" fill="#7a5f94" /><rect width="14" height="5" y="7" fill="#7ea6cb" /><rect width="6" height="5" y="14" fill="#f3a268" /><rect width="8" height="5" y="20" fill="#f77b8a" /></svg>
      Show Me
    </div>
  </div>
);

export default function App() {
  return (
    <div className="w-[1920px] h-[1080px] flex flex-col overflow-hidden bg-[#f3f3f3] font-['Lato',sans-serif] text-[#333]">
      <div className="h-[29px] shrink-0 flex items-center bg-[linear-gradient(90deg,#f1eff6_0%,#f3eff6_50%,#f9ebf5_75%,#f2f0f7_100%)] text-[14px] text-[#222] font-['Open_Sans',sans-serif]">
        <div className="ml-[4px] w-[20px] h-[20px] bg-white/70 flex items-center justify-center"><TableauLogo size={16} mono /></div>
        <span className="ml-[4px]">Tableau - Visualization</span>
        <Minus size={14} strokeWidth={1.2} className="ml-auto mr-[43px]" />
        <svg width="12" height="14" viewBox="0 0 12 14" fill="none" stroke="#222" className="mr-[44px]"><rect x="1" y="3" width="8" height="10" rx="1.500" /><path d="M3.500 1h5a2 2 0 0 1 2 2v7" /></svg>
        <X size={18} strokeWidth={1.100} className="mr-[23px]" />
      </div>
      <div className="h-[25px] shrink-0 flex items-center gap-[15.5px] bg-white pl-[8px] text-[15px] text-[#222]">
        {["File", "Data", "Worksheet", "Dashboard", "Story", "Analysis", "Map", "Format", "Server", "Window", "Help"].map((m) => (
          <span key={m}>{m}</span>
        ))}
      </div>
      <Toolbar />
      <div className="h-[852px] shrink-0 flex relative">
        <DataPane />
        <MarksColumn />
        <div className="ml-[7px] w-[1245px] shrink-0 flex flex-col">
          <Shelf label="Columns" icon={<svg width="12" height="12" viewBox="0 0 12 12" stroke="#666" strokeWidth="1.600"><path d="M2 3v8M6 3v8M10 3v8M2 0v1.600M6 0v1.600M10 0v1.600" /></svg>} />
          <div className="h-[6px] shrink-0" />
          <Shelf label="Rows" icon={<svg width="12" height="12" viewBox="0 0 12 12" stroke="#666" strokeWidth="1.600"><path d="M3 2h9M3 6h9M3 10h9M0 2h1.600M0 6h1.600M0 10h1.600" /></svg>} />
          <div className="mt-[6px] h-[770px] shrink-0 bg-white border border-[#d8d8d8] pl-[15px]">
            <div className="h-[59px] flex items-center justify-center -ml-[15px] text-[26.5px] font-bold text-[#333]">Advertisement Cost</div>
            <Treemap />
          </div>
        </div>
        <ShowMe />
      </div>
      <Tabs />
      <StatusBar />
      <Taskbar />
    </div>
  );
}
